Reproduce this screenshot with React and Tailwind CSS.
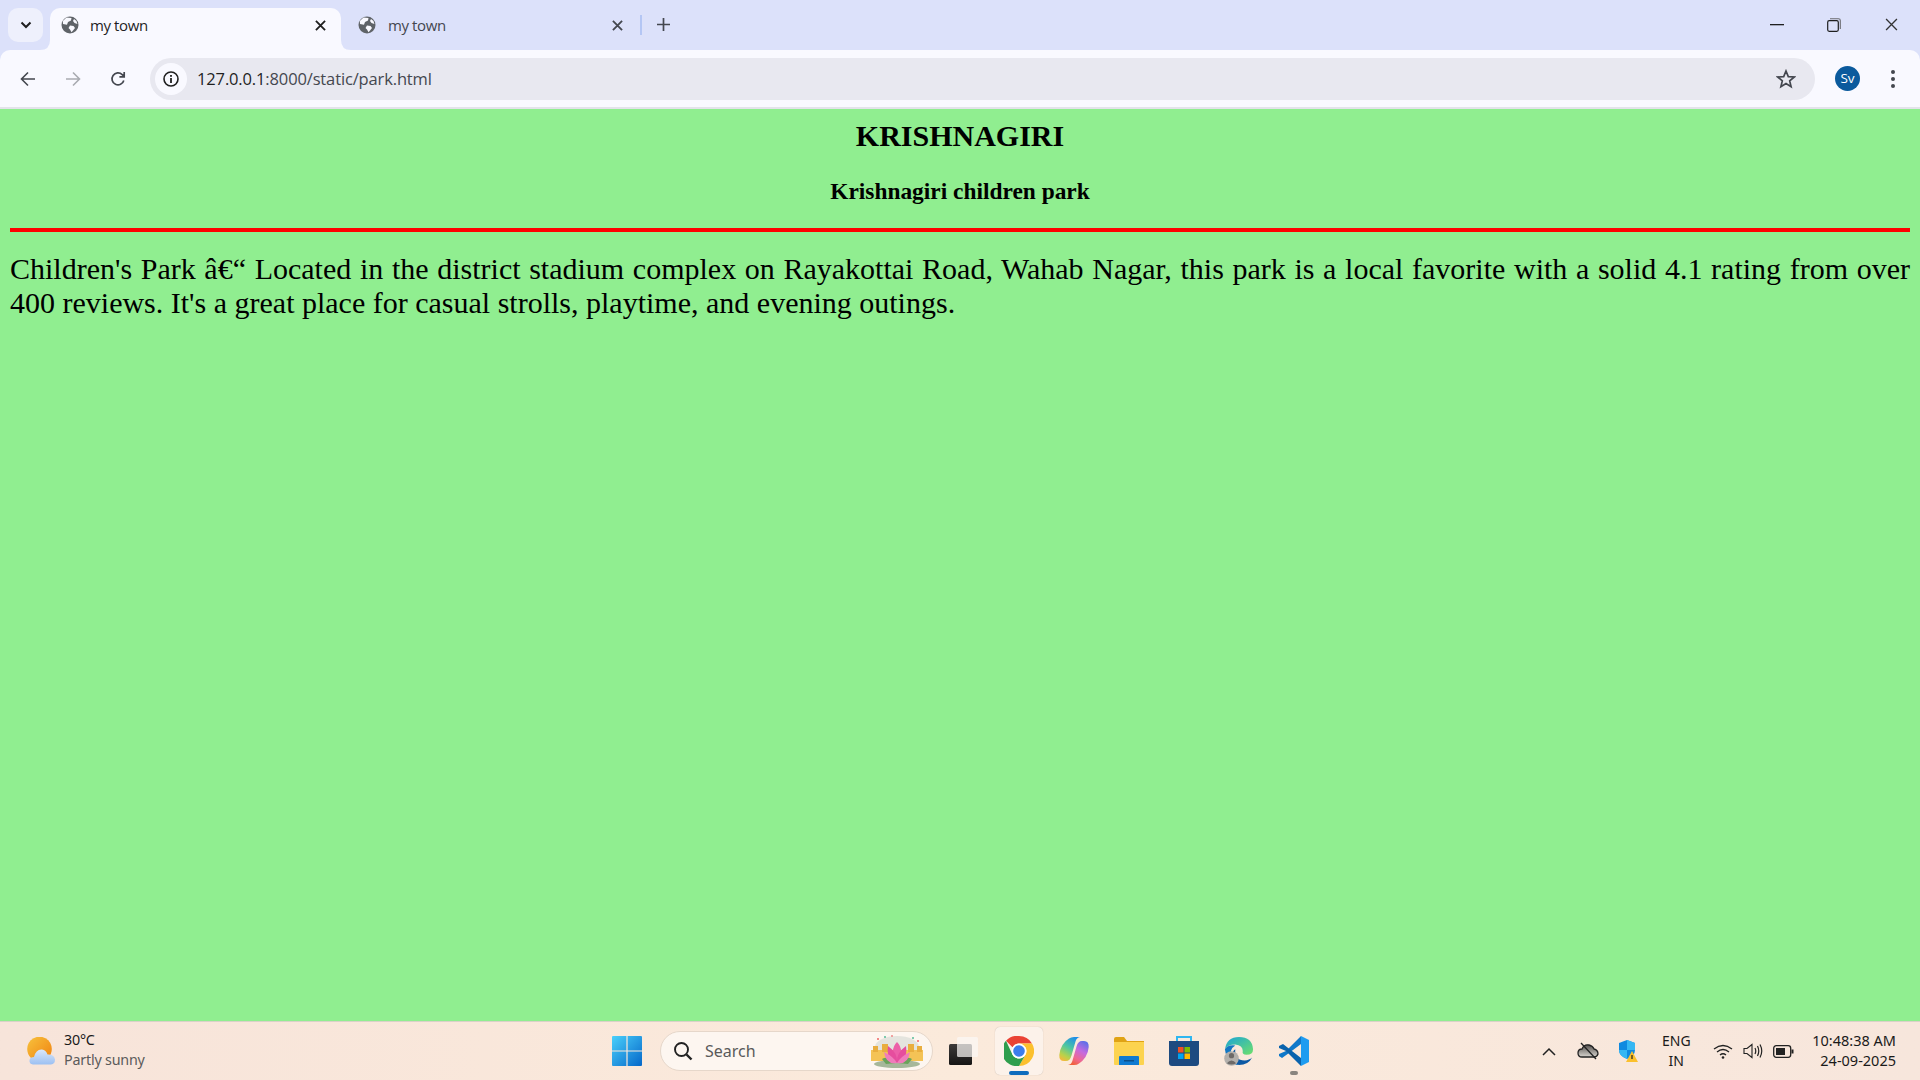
import React from "react";

const Globe = () => (
  <svg width="18" height="18" viewBox="0 0 18 18" className="shrink-0">
    <circle cx="9" cy="9" r="8.5" fill="#5f6368" />
    <path d="M5.5 1.5 L10.5 2 L10 4.5 L7 6 L6 8.8 L2 8 L1.8 5 Z M9 9.5 L12.5 10 L14 12 L12 14.5 L10.5 16.3 L9 13.5 L7.5 12 Z M13 3 L15.5 5 L16.4 8 L13.5 7 L12 5 Z" fill="#f9f9ff" />
  </svg>
);

const X = ({ size = 12, color = "#1f1f1f", w = 2 }) => (
  <svg width={size} height={size} viewBox="0 0 12 12" className="shrink-0">
    <path d="M1 1 L11 11 M11 1 L1 11" stroke={color} strokeWidth={w} fill="none" />
  </svg>
);

const Chrome = () => (
  <svg width="30" height="30" viewBox="0 0 30 30">
    <path d="M15 0 A15 15 0 0 1 28 7.5 L15 7.5 A7.5 7.5 0 0 0 8.5 11.2 L2 4.8 A15 15 0 0 1 15 0Z" fill="#ea4335" />
    <path d="M28 7.5 A15 15 0 0 1 15 30 L21.5 18.7 A7.5 7.5 0 0 0 21.5 11.2 L15 7.5Z" fill="#fbc02d" />
    <path d="M2 4.8 L8.5 18.7 A7.5 7.5 0 0 0 21.5 18.7 L15 30 A15 15 0 0 1 2 4.8Z" fill="#2e9e4d" />
    <circle cx="15" cy="15" r="7.4" fill="#fff" />
    <circle cx="15" cy="15" r="5.8" fill="#3b7ded" />
  </svg>
);

const Copilot = () => (
  <svg width="30" height="28" viewBox="0 0 30 28">
    <defs>
      <linearGradient id="cpa" x1="0.7" y1="0" x2="0.2" y2="1"><stop offset="0" stopColor="#1f8fe8" /><stop offset="0.45" stopColor="#4fc7a0" /><stop offset="0.8" stopColor="#b9d24a" /><stop offset="1" stopColor="#f5b83d" /></linearGradient>
      <linearGradient id="cpb" x1="0.8" y1="0" x2="0.3" y2="1"><stop offset="0" stopColor="#5a6fe8" /><stop offset="0.4" stopColor="#c46ae0" /><stop offset="0.75" stopColor="#f0688f" /><stop offset="1" stopColor="#f0613a" /></linearGradient>
    </defs>
    <path d="M10 1.5 Q12 0 15 0 L21 0 Q17.5 0.5 16.5 4.5 L12.5 18.5 Q11 24 7 24 L5 24 Q0 24 0.3 18 Q0.6 13 3.5 8 Q6.5 3.5 10 1.5Z" fill="url(#cpa)" />
    <path d="M20 26.5 Q18 28 15 28 L9 28 Q12.5 27.5 13.5 23.5 L17.5 9.5 Q19 4 23 4 L25 4 Q30 4 29.7 10 Q29.4 15 26.5 20 Q23.5 24.5 20 26.5Z" fill="url(#cpb)" />
  </svg>
);

const Files = () => (
  <svg width="30" height="30" viewBox="0 0 30 30">
    <path d="M0 3 Q0 1 2 1 L10 1 L13 5 L30 5 L30 10 L0 10Z" fill="#e0a315" />
    <path d="M0 6 L30 6 L30 28 Q30 29 29 29 L1 29 Q0 29 0 28Z" fill="#fcd34f" />
    <path d="M5 29 L5 21 Q5 20 6 20 L24 20 Q25 20 25 21 L25 29Z" fill="#0f7ad1" />
    <rect x="10" y="24" width="10" height="1.5" fill="#0b4e8a" />
  </svg>
);

const Store = () => (
  <svg width="30" height="32" viewBox="0 0 30 32">
    <path d="M8 6 L8 2 L22 2 L22 6" stroke="#2fb6f0" strokeWidth="2" fill="none" />
    <path d="M0 6 L30 6 L30 28 Q30 31 27 31 L3 31 Q0 31 0 28Z" fill="#1d4a80" />
    <rect x="9" y="12" width="5.5" height="5.5" fill="#f25022" />
    <rect x="15.5" y="12" width="5.5" height="5.5" fill="#7fba00" />
    <rect x="9" y="18.5" width="5.5" height="5.5" fill="#00a4ef" />
    <rect x="15.5" y="18.5" width="5.5" height="5.5" fill="#ffb900" />
  </svg>
);

const Edge = () => (
  <svg width="30" height="30" viewBox="0 0 32 32">
    <defs>
      <linearGradient id="eda" x1="0" y1="0" x2="1" y2="1"><stop offset="0" stopColor="#1aa4d8" /><stop offset="1" stopColor="#6fe06a" /></linearGradient>
    </defs>
    <path d="M1 14 Q3 1 16 1 Q30 1 31 14 Q31 20 24 20 Q19 20 20 16 Q20 10 12 9 Q4 9 1 14Z" fill="url(#eda)" />
    <path d="M1 14 Q4 9 12 10 Q5 14 8 24 Q10 28 16 31 Q3 30 1 14Z" fill="#1277c4" />
    <path d="M12 14 Q11 26 22 26 Q27 26 30 23 Q26 31 16 31 Q8 29 9 20 Q9 16 12 14Z" fill="#0c59a4" />
    <circle cx="8" cy="24" r="7.8" fill="#b3b0ac" />
    <circle cx="8" cy="21" r="2.8" fill="#6d6a68" />
    <path d="M3 29 Q8 23 13 29 Q8 32 3 29Z" fill="#6d6a68" />
  </svg>
);

const VSCode = () => (
  <svg width="30" height="30" viewBox="0 0 30 30">
    <path d="M22 0 L30 4 L30 26 L22 30 L22 0Z" fill="#1f9cf0" />
    <path d="M22 0 L22 8 L10 17 L3 22 L0 20 L0 18 L7 15 L22 0Z" fill="#0f78c9" />
    <path d="M22 30 L22 22 L4 8 L0 10 L0 12 L7 15 L22 30Z" fill="#0a63ad" />
  </svg>
);

const Lotus = () => (
  <svg width="58" height="36" viewBox="0 0 58 36">
    <ellipse cx="29" cy="14" rx="22" ry="11" fill="#e4e4de" />
    <rect x="3" y="17" width="52" height="11" fill="#f4c356" />
    <rect x="5" y="13" width="5" height="6" fill="#e9ae3f" />
    <rect x="14" y="11" width="6" height="8" fill="#e9ae3f" />
    <rect x="40" y="11" width="6" height="8" fill="#e9ae3f" />
    <rect x="49" y="13" width="5" height="6" fill="#e9ae3f" />
    <ellipse cx="29" cy="31" rx="23" ry="4" fill="#a6b79a" />
    <path d="M14 26 Q20 22 28 30 L18 31Z M44 26 Q38 22 30 30 L40 31Z" fill="#6aa35a" />
    <path d="M29 9 Q37 17 29 30 Q21 17 29 9Z" fill="#ec5fa8" />
    <path d="M20 13 Q30 20 29 30 Q18 28 20 13Z M38 13 Q28 20 29 30 Q40 28 38 13Z" fill="#e64d9e" />
    <path d="M16 19 Q26 24 29 30 Q18 32 16 19Z M42 19 Q32 24 29 30 Q40 32 42 19Z" fill="#f07cbb" />
    <circle cx="10" cy="6" r="1" fill="#e66" /><circle cx="17" cy="4" r="1" fill="#5b9" /><circle cx="24" cy="3" r="1" fill="#e88" /><circle cx="45" cy="5" r="1" fill="#5b9" /><circle cx="50" cy="8" r="1" fill="#e66" />
  </svg>
);

export default function App() {
  return (
    <div className="w-[1920px] h-[1080px] overflow-hidden flex flex-col bg-[#90ee90] font-['Open_Sans',sans-serif]">
      {/* Tab strip */}
      <div className="h-[50px] shrink-0 bg-[#dce1fa] flex items-start pt-[8px]">
        <div className="ml-[8px] w-[35px] h-[34px] rounded-[10px] bg-[#eef0fc] flex items-center justify-center shrink-0">
          <svg width="12" height="8" viewBox="0 0 12 8"><path d="M1.5 1.5 L6 6 L10.5 1.5" stroke="#1f1f1f" strokeWidth="2" fill="none" /></svg>
        </div>
        <div className="relative flex items-center h-[42px] w-[291px] ml-[7px] pl-[11px] pr-[15px] pb-[8px] bg-[#f9f9ff] rounded-t-[10px] shrink-0">
          <svg width="10" height="10" viewBox="0 0 10 10" className="absolute -left-[10px] bottom-0"><path d="M10 0 V10 H0 Q10 10 10 0Z" fill="#f9f9ff" /></svg>
          <svg width="10" height="10" viewBox="0 0 10 10" className="absolute -right-[10px] bottom-0"><path d="M0 0 V10 H10 Q0 10 0 0Z" fill="#f9f9ff" /></svg>
          <Globe />
          <span className="ml-[11px] text-[15px] text-[#1f1f1f] flex-1 tracking-[-0.4px]">my town</span>
          <X color="#1f1f1f" size={11} />
        </div>
        <div className="flex items-center h-[42px] w-[299px] pl-[17px] pr-[17px] pb-[8px] shrink-0">
          <Globe />
          <span className="ml-[12px] text-[15px] text-[#44474f] flex-1 tracking-[-0.4px]">my town</span>
          <X color="#44474f" size={11} />
        </div>
        <div className="w-[2px] h-[20px] mt-[7px] bg-[#b4c6f4] shrink-0" />
        <div className="ml-[14px] mt-[9px] shrink-0">
          <svg width="15" height="15" viewBox="0 0 15 15"><path d="M7.5 1 V14 M1 7.5 H14" stroke="#44474f" strokeWidth="1.7" fill="none" /></svg>
        </div>
        <div className="flex-1" />
        <div className="flex items-center h-[33px] pr-[22px]">
          <svg width="14" height="2" viewBox="0 0 14 2"><rect width="14" height="1.3" fill="#1f1f1f" /></svg>
          <svg width="14" height="14" viewBox="0 0 14 14" className="ml-[43px]">
            <rect x="0.7" y="2.7" width="10.6" height="10.6" rx="1.5" stroke="#1f1f1f" strokeWidth="1.2" fill="none" />
            <path d="M3 0.7 H11.5 Q13.3 0.7 13.3 2.5 V11" stroke="#6b6b70" strokeWidth="1.1" fill="none" />
          </svg>
          <div className="ml-[44px]"><X size={13} color="#333" w={1.2} /></div>
        </div>
      </div>

      {/* Toolbar */}
      <div className="h-[59px] shrink-0 bg-[#dce1fa]">
        <div className="h-[59px] bg-[#f9f9ff] rounded-t-[10px] border-b-[2px] border-[#e3e3ea] flex items-start pt-[8px]">
          <div className="ml-[20px] mt-[13px]">
            <svg width="16" height="16" viewBox="0 0 16 16"><path d="M15 8 H2 M8 1.5 L1.5 8 L8 14.5" stroke="#44474f" strokeWidth="1.6" fill="none" /></svg>
          </div>
          <div className="ml-[29px] mt-[13px]">
            <svg width="16" height="16" viewBox="0 0 16 16"><path d="M1 8 H14 M8 1.5 L14.5 8 L8 14.5" stroke="#a9abb1" strokeWidth="1.6" fill="none" /></svg>
          </div>
          <div className="ml-[29px] mt-[13px]">
            <svg width="16" height="16" viewBox="0 0 16 16"><path d="M13.8 9.5 A6 6 0 1 1 12.2 3.6 L14 5.4 M14.2 1 V5.8 H9.4" stroke="#44474f" strokeWidth="1.7" fill="none" /></svg>
          </div>
          <div className="ml-[24px] w-[1665px] h-[42px] rounded-full bg-[#e8e8f0] flex items-center pl-[5px] pr-[19px]">
            <div className="w-[32px] h-[32px] rounded-full bg-[#f9f9ff] flex items-center justify-center">
              <svg width="16" height="16" viewBox="0 0 16 16">
                <circle cx="8" cy="8" r="7" stroke="#1f1f1f" strokeWidth="1.6" fill="none" />
                <rect x="7.1" y="7" width="1.8" height="5" fill="#1f1f1f" /><rect x="7.1" y="4" width="1.8" height="1.8" fill="#1f1f1f" />
              </svg>
            </div>
            <span className="ml-[10px] text-[16.5px] tracking-[-0.14px] text-[#1f1f1f] flex-1">127.0.0.1<span className="text-[#44474f]">:8000/static/park.html</span></span>
            <svg width="20" height="20" viewBox="0 0 20 20"><path d="M10 2 L12.3 7.6 L18.3 8 L13.7 11.9 L15.1 17.8 L10 14.6 L4.9 17.8 L6.3 11.9 L1.7 8 L7.7 7.6Z" stroke="#44474f" strokeWidth="1.7" fill="none" /></svg>
          </div>
          <div className="ml-[20px] mt-[8px] w-[25px] h-[25px] rounded-full bg-[#0b5a9d] flex items-center justify-center text-[13.5px] text-white">Sv</div>
          <div className="ml-[31px] mt-[12px] flex flex-col gap-[3px]">
            <div className="w-[4px] h-[4px] rounded-full bg-[#44474f]" />
            <div className="w-[4px] h-[4px] rounded-full bg-[#44474f]" />
            <div className="w-[4px] h-[4px] rounded-full bg-[#44474f]" />
          </div>
        </div>
      </div>

      {/* Page */}
      <main className="flex-1 min-h-0 bg-[#90ee90] px-[10px] font-['Liberation_Serif',serif] text-black">
        <h1 className="text-[30px] leading-[34px] font-bold text-center pt-[10px]">KRISHNAGIRI</h1>
        <h2 className="text-[23.4px] leading-[25px] font-bold text-center mt-[26px]">Krishnagiri children park</h2>
        <div className="h-[4px] bg-[#ff0000] mt-[24px]" />
        <p className="text-[30px] leading-[34px] text-justify mt-[20px]">Children's Park â€“ Located in the district stadium complex on Rayakottai Road, Wahab Nagar, this park is a local favorite with a solid 4.1 rating from over 400 reviews. It's a great place for casual strolls, playtime, and evening outings.</p>
      </main>

      {/* Taskbar */}
      <footer className="h-[59px] shrink-0 border-t border-[#d9d2c8] bg-gradient-to-r from-[#f7e4da] via-[#fbeadb] to-[#f7e6dc] flex items-center">
        <div className="w-[612px] flex items-center pl-[27px] shrink-0">
          <svg width="28" height="28" viewBox="0 0 28 28" className="shrink-0">
            <defs>
              <linearGradient id="sun" x1="0" y1="0" x2="1" y2="1"><stop offset="0" stopColor="#f7c23d" /><stop offset="1" stopColor="#f0810f" /></linearGradient>
              <linearGradient id="cld" x1="0" y1="0" x2="0" y2="1"><stop offset="0" stopColor="#dbe8fb" /><stop offset="1" stopColor="#9cc0f2" /></linearGradient>
            </defs>
            <circle cx="12.5" cy="12" r="12.3" fill="url(#sun)" />
            <path d="M6 27.5 Q2 27 2.5 23 Q3 20 7 20 Q9 12 15 12.5 Q19 13 20.5 17.5 Q27 17 28 22.5 Q28 27 24 27.5Z" fill="url(#cld)" />
          </svg>
          <div className="ml-[9px] -mt-[2px] text-[14.3px] leading-[20px] tracking-[-0.2px] font-['Noto_Sans',sans-serif]">
            <div className="text-[#1a1a1a]">30°C</div>
            <div className="text-[#5b5b5b]">Partly sunny</div>
          </div>
        </div>

        <svg width="30" height="30" viewBox="0 0 30 30" className="shrink-0">
          <defs><linearGradient id="win" x1="0" y1="0" x2="1" y2="1"><stop offset="0" stopColor="#4ad0fb" /><stop offset="1" stopColor="#0567c9" /></linearGradient></defs>
          <path d="M1 0 H14.4 V14.4 H0 V1 Q0 0 1 0Z M15.6 0 H29 Q30 0 30 1 V14.4 H15.6Z M0 15.6 H14.4 V30 H1 Q0 30 0 29Z M15.6 15.6 H30 V29 Q30 30 29 30 H15.6Z" fill="url(#win)" />
        </svg>
        <div className="ml-[18px] w-[273px] h-[40px] rounded-full bg-[#fdf6f0] border border-[#e6d7ca] flex items-center pl-[12px] pr-[6px] shrink-0">
          <svg width="20" height="20" viewBox="0 0 20 20"><circle cx="8.5" cy="8.5" r="6.5" stroke="#222" strokeWidth="1.9" fill="none" /><path d="M13.5 13.5 L18.5 18.5" stroke="#222" strokeWidth="2.4" /></svg>
          <span className="ml-[12px] text-[16px] text-[#5a5a5a] flex-1 font-['Noto_Sans',sans-serif]">Search</span>
          <Lotus />
        </div>
        <svg width="29" height="28" viewBox="0 0 29 28" className="ml-[16px] shrink-0">
          <defs><linearGradient id="tv" x1="0" y1="0" x2="0" y2="1"><stop offset="0" stopColor="#3d3b3a" /><stop offset="1" stopColor="#161514" /></linearGradient></defs>
          <rect x="0" y="7" width="23" height="21" rx="1.5" fill="url(#tv)" />
          <rect x="8" y="0" width="21" height="20" rx="1.5" fill="#fbf8f5" fillOpacity="0.72" />
        </svg>
        <div className="ml-[17px] w-[48px] h-[48px] rounded-[5px] bg-[#fcf2ea] shadow-[0_0_1px_rgba(0,0,0,0.25)] relative flex items-center justify-center shrink-0">
          <Chrome />
          <div className="absolute bottom-0 left-[14px] w-[20px] h-[4px] rounded-full bg-[#0f6cbd]" />
        </div>
        <div className="ml-[16px] shrink-0"><Copilot /></div>
        <div className="ml-[25px] shrink-0"><Files /></div>
        <div className="ml-[25px] shrink-0"><Store /></div>
        <div className="ml-[25px] shrink-0"><Edge /></div>
        <div className="ml-[25px] relative shrink-0">
          <VSCode />
          <div className="absolute -bottom-[9px] left-[11px] w-[8px] h-[4px] rounded-full bg-[#8a857f]" />
        </div>

        <div className="flex-1" />

        <div className="flex items-center pr-[24px] text-[#1a1a1a] font-['Noto_Sans',sans-serif]">
          <svg width="14" height="9" viewBox="0 0 14 9"><path d="M1 8 L7 2 L13 8" stroke="#222" strokeWidth="1.5" fill="none" /></svg>
          <svg width="22" height="20" viewBox="0 0 22 20" className="ml-[21px]">
            <defs><linearGradient id="cl2" x1="0" y1="0" x2="0" y2="1"><stop offset="0" stopColor="#55524f" /><stop offset="1" stopColor="#d8d4cf" /></linearGradient></defs>
            <path d="M5 16 Q1 16 1 12 Q1 8 5 8 Q7 3 12 4 Q16 5 17 8 Q21 9 21 13 Q20 16 17 16Z" fill="url(#cl2)" stroke="#222" strokeWidth="1.3" />
            <path d="M4 2 L19 18" stroke="#222" strokeWidth="1.3" />
          </svg>
          <svg width="20" height="24" viewBox="0 0 20 24" className="ml-[19px]">
            <path d="M9 1 L17 4 V11 Q17 17 9 20 Q1 17 1 11 V4Z" fill="#0f8ae0" />
            <path d="M9 1 L17 4 V11 H9Z M9 11 V20 Q1 17 1 11Z" fill="#35b7f3" />
            <path d="M14 12 L20 23 H8Z" fill="#fbc02d" />
            <rect x="13.4" y="16" width="1.2" height="4" fill="#222" />
          </svg>
          <div className="ml-[21px] w-[34px] text-center text-[14px] leading-[20px] -mt-[1px]"><div>ENG</div><div>IN</div></div>
          <svg width="20" height="15" viewBox="0 0 20 15" className="ml-[20px]">
            <path d="M1 5 Q10 -2 19 5 M4 8 Q10 3 16 8 M7 11 Q10 8.5 13 11" stroke="#222" strokeWidth="1.3" fill="none" /><circle cx="10" cy="13.5" r="1.3" fill="#222" />
          </svg>
          <svg width="20" height="16" viewBox="0 0 20 16" className="ml-[10px]">
            <path d="M1 5.5 H4 L9 1.5 V14.5 L4 10.5 H1Z" stroke="#222" strokeWidth="1.1" fill="none" />
            <path d="M12 5 Q13.5 8 12 11 M14.5 3 Q17 8 14.5 13 M17 1.5 Q20.5 8 17 14.5" stroke="#222" strokeWidth="1.2" fill="none" />
          </svg>
          <svg width="21" height="13" viewBox="0 0 21 13" className="ml-[10px]">
            <rect x="0.7" y="0.7" width="17" height="11.6" rx="2.5" stroke="#222" strokeWidth="1.3" fill="none" />
            <rect x="3" y="3" width="9" height="7" fill="#222" /><rect x="18.5" y="4.5" width="2" height="4" fill="#222" />
          </svg>
          <div className="ml-[18px] -mt-[2px] text-right text-[14.5px] leading-[20px]"><div>10:48:38 AM</div><div>24-09-2025</div></div>
        </div>
      </footer>
    </div>
  );
}
